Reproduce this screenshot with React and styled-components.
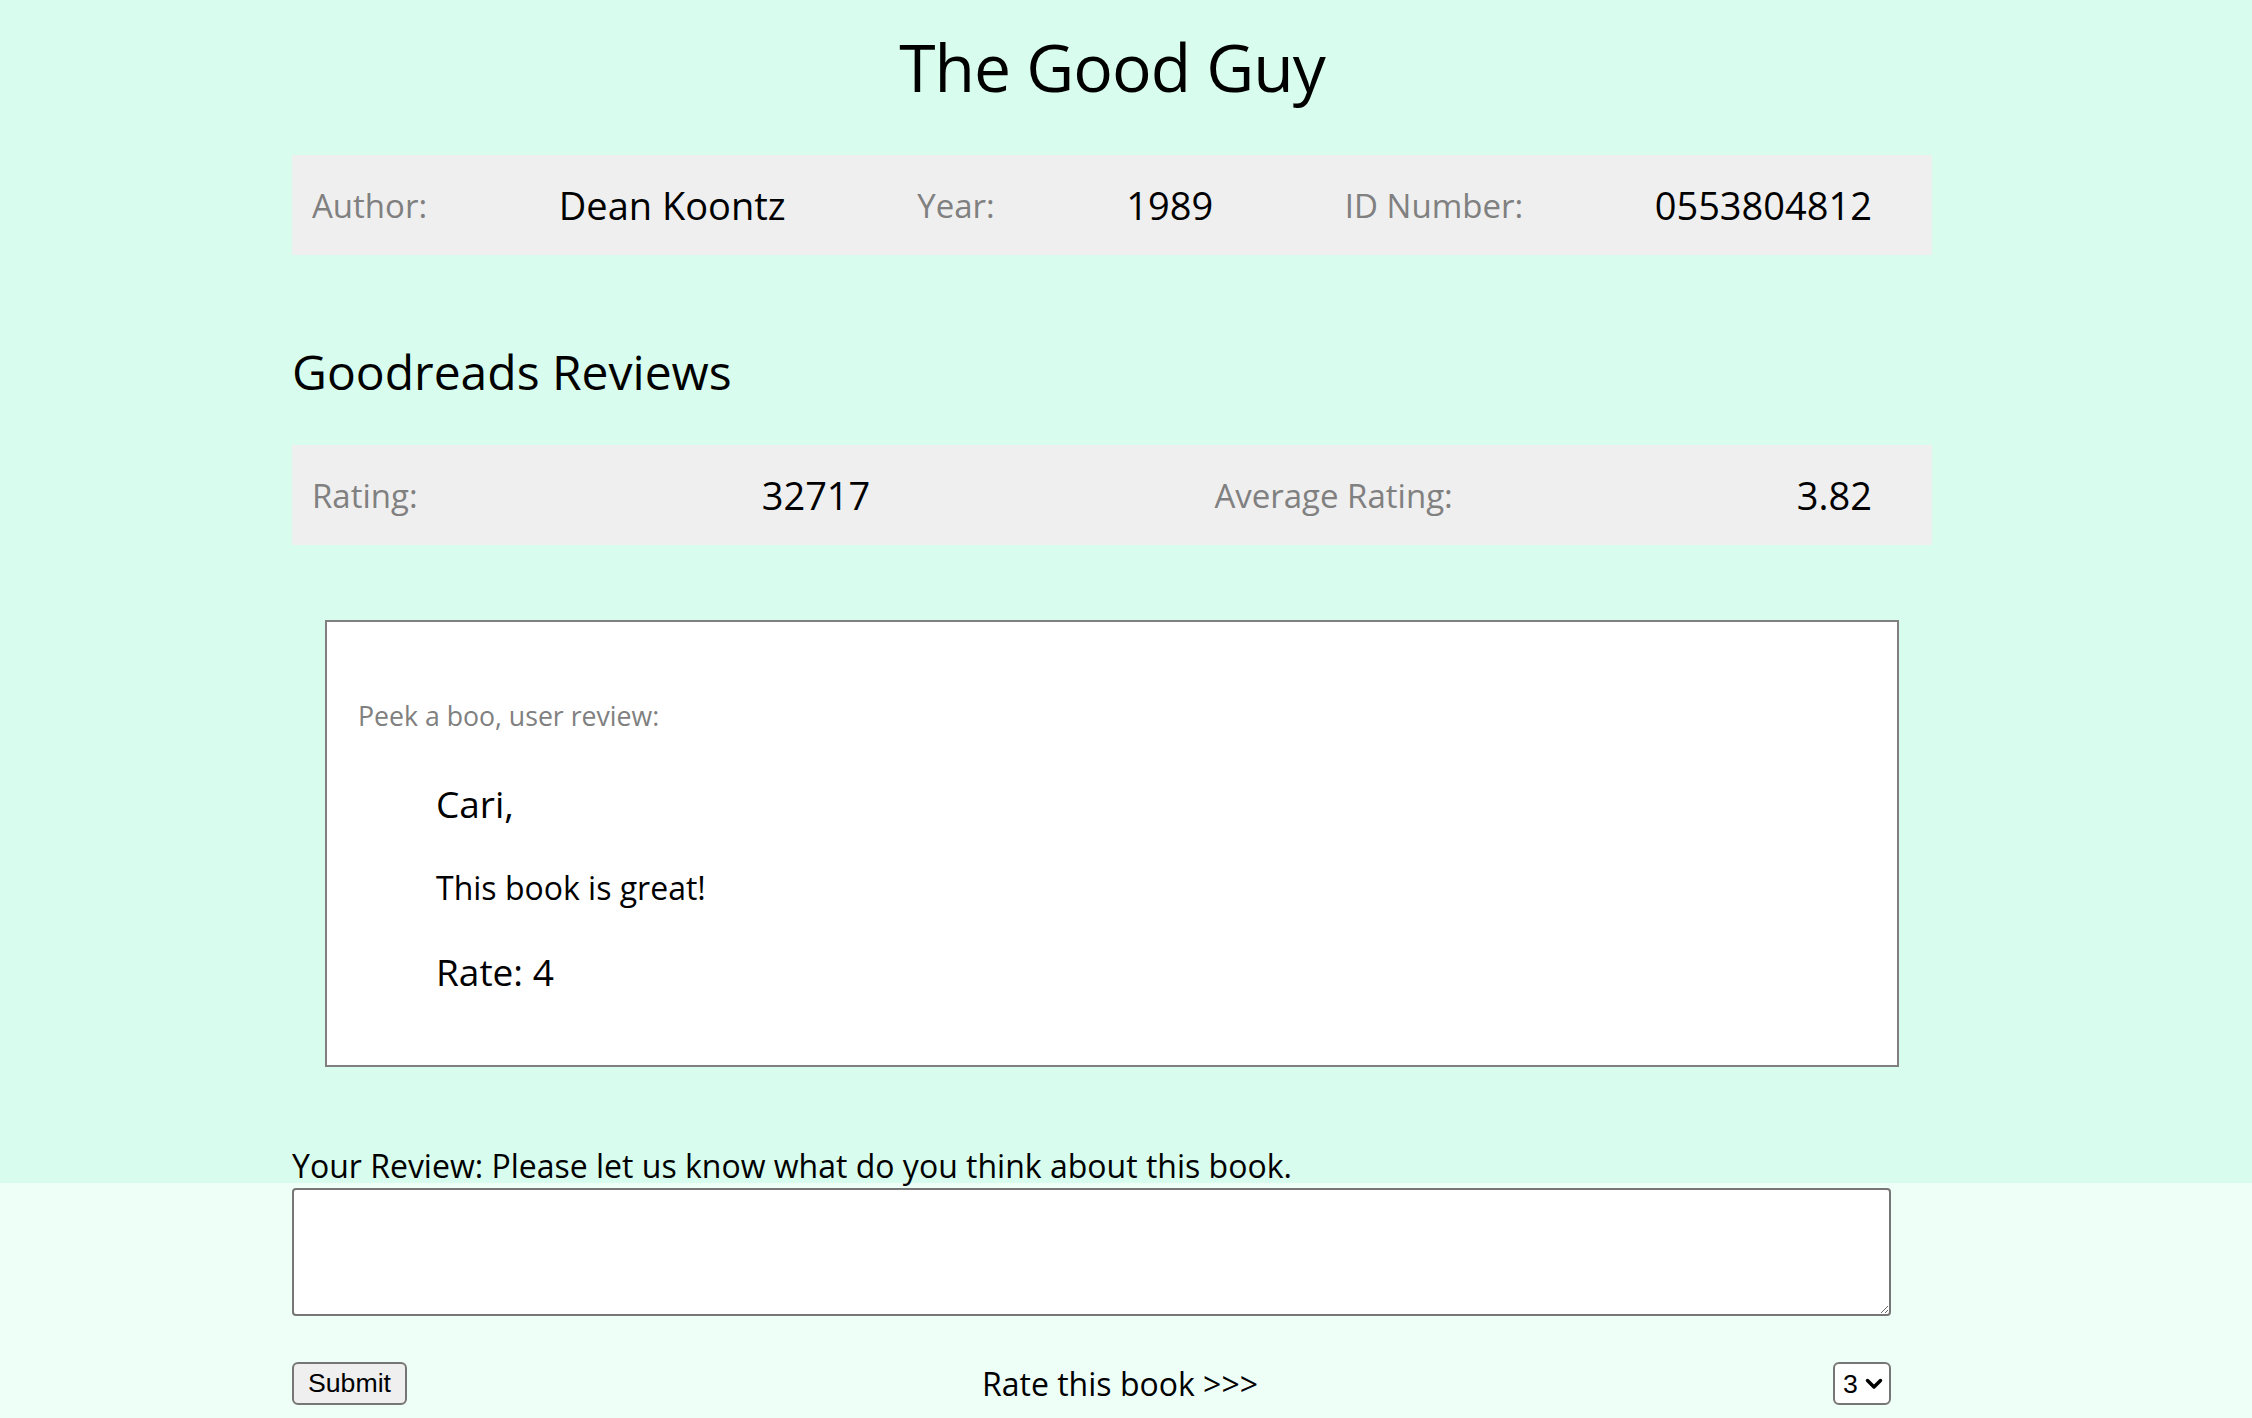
import React from "react";
import styled, { createGlobalStyle } from "styled-components";

const GlobalStyle = createGlobalStyle`
  html, body {
    margin: 0;
    padding: 0;
    font-family: "Open Sans", "Noto Sans", sans-serif;
    color: #000;
  }
  body {
    min-height: 1418px;
    background: linear-gradient(#d8fdee 0, #d8fdee 1183px, #eefff8 1183px);
  }
`;

const Page = styled.div`
  padding-right: 28px;
`;

const Container = styled.div`
  width: 1640px;
  margin: 0 auto;
`;

const Title = styled.h1`
  margin: 0;
  padding-top: 21px;
  font-size: 66px;
  font-weight: 400;
  letter-spacing: -1px;
  line-height: normal;
  text-align: center;
`;

const InfoBar = styled.div`
  display: flex;
  justify-content: space-between;
  align-items: center;
  height: 100px;
  margin-top: ${(p) => p.$top}px;
  padding: 0 60px 0 20px;
  background: #efefef;
`;

const Label = styled.span`
  font-size: 33px;
  color: #808080;
`;

const Value = styled.span`
  font-size: 38px;
`;

const Heading = styled.h2`
  margin: 84px 0 0;
  font-size: 48px;
  font-weight: 400;
  line-height: normal;
`;

const Card = styled.div`
  margin: 75px 33px 0;
  padding: 75px 31px 68px;
  background: #fff;
  border: 2px solid #808080;
`;

const Peek = styled.p`
  margin: 0;
  font-size: 26.67px;
  line-height: normal;
  color: #808080;
`;

const Review = styled.div`
  margin: 44px 0 0 78px;
`;

const ReviewName = styled.h3`
  margin: 0;
  font-size: 37px;
  font-weight: 500;
  line-height: normal;
`;

const ReviewText = styled.p`
  margin: 37px 0 0;
  font-size: 32px;
  line-height: normal;
`;

const ReviewRate = styled(ReviewName)`
  margin-top: 37px;
`;

const Form = styled.form`
  width: 1599px;
  margin-top: 77px;
`;

const FieldLabel = styled.label`
  display: block;
  font-size: 32px;
  line-height: normal;
`;

const TextArea = styled.textarea`
  display: block;
  box-sizing: border-box;
  width: 100%;
  height: 128px;
  margin-top: 1px;
  border: 2px solid #767676;
  border-radius: 4px;
  background: #fff;
`;

const Actions = styled.div`
  display: flex;
  justify-content: space-between;
  align-items: center;
  margin-top: 46px;
`;

const SubmitButton = styled.button`
  box-sizing: border-box;
  height: 43px;
  padding: 0 14px;
  font-family: "Liberation Sans", Arial, sans-serif;
  font-size: 26.67px;
  color: #000;
  background: #efefef;
  border: 2px solid #767676;
  border-radius: 6px;
`;

const RateText = styled.span`
  font-size: 32px;
`;

const SelectWrap = styled.div`
  position: relative;
  width: 58px;
  height: 43px;
`;

const Select = styled.select`
  box-sizing: border-box;
  width: 100%;
  height: 100%;
  padding: 0 0 0 8px;
  appearance: none;
  font-family: "Liberation Sans", Arial, sans-serif;
  font-size: 26.67px;
  color: #000;
  background: #fff;
  border: 2px solid #767676;
  border-radius: 6px;
`;

const Chevron = styled.svg`
  position: absolute;
  right: 8px;
  top: 16px;
  pointer-events: none;
`;

const book = {
  title: "The Good Guy",
  author: "Dean Koontz",
  year: "1989",
  isbn: "0553804812",
  ratings: "32717",
  average: "3.82",
};

export default function App() {
  return (
    <>
      <GlobalStyle />
      <Page>
        <Container>
          <Title>{book.title}</Title>
          <InfoBar $top={44}>
            <Label>Author:</Label>
            <Value>{book.author}</Value>
            <Label>Year:</Label>
            <Value>{book.year}</Value>
            <Label>ID Number:</Label>
            <Value>{book.isbn}</Value>
          </InfoBar>

          <Heading>Goodreads Reviews</Heading>
          <InfoBar $top={41}>
            <Label>Rating:</Label>
            <Value>{book.ratings}</Value>
            <Label>Average Rating:</Label>
            <Value>{book.average}</Value>
          </InfoBar>

          <Card>
            <Peek>Peek a boo, user review:</Peek>
            <Review>
              <ReviewName>Cari,</ReviewName>
              <ReviewText>This book is great!</ReviewText>
              <ReviewRate>Rate: 4</ReviewRate>
            </Review>
          </Card>

          <Form onSubmit={(e) => e.preventDefault()}>
            <FieldLabel htmlFor="review">
              Your Review: Please let us know what do you think about this book.
            </FieldLabel>
            <TextArea id="review" />
            <Actions>
              <SubmitButton type="submit">Submit</SubmitButton>
              <RateText>Rate this book &gt;&gt;&gt;</RateText>
              <SelectWrap>
                <Select defaultValue="3">
                  <option value="1">1</option>
                  <option value="2">2</option>
                  <option value="3">3</option>
                  <option value="4">4</option>
                  <option value="5">5</option>
                </Select>
                <Chevron width="18" height="12" viewBox="0 0 18 12">
                  <path
                    d="M2.5 2.5 L9 9 L15.5 2.5"
                    fill="none"
                    stroke="#000"
                    strokeWidth="3.5"
                    strokeLinecap="round"
                    strokeLinejoin="round"
                  />
                </Chevron>
              </SelectWrap>
            </Actions>
          </Form>
        </Container>
      </Page>
    </>
  );
}
